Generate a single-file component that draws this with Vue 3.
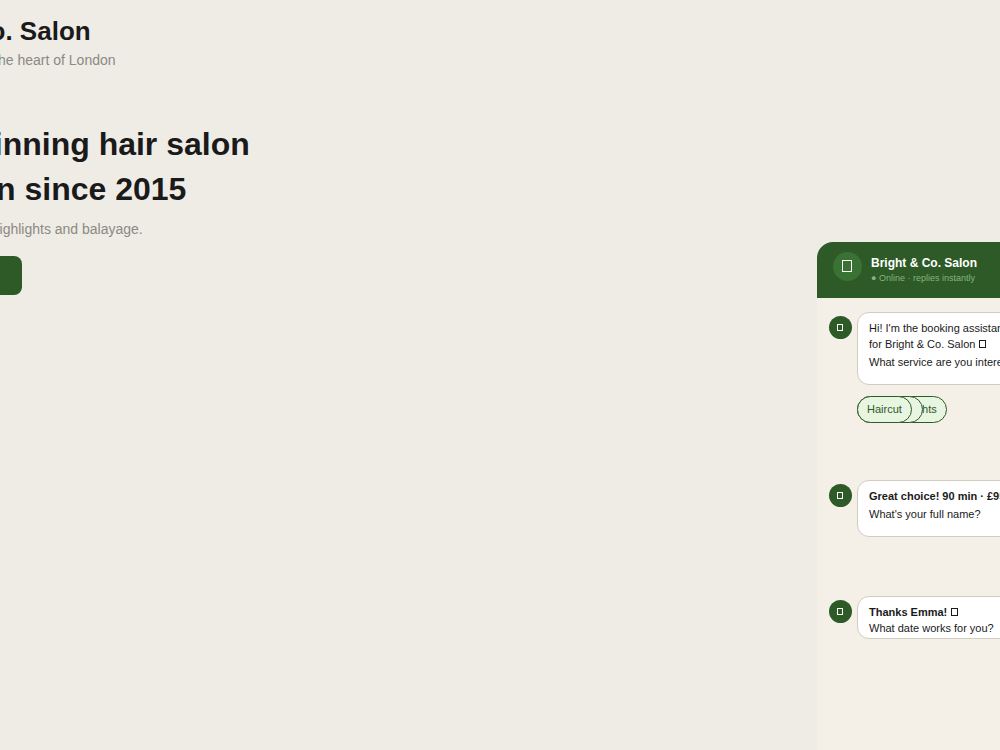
<script setup>
const headline = ['Award-winning hair salon', 'in London since 2015']
const services = [
  { name: 'Hair highlights' },
  { name: 'Colour', wide: true },
  { name: 'Haircut' },
]
</script>

<template>
  <div class="page">
    <main class="intro">
      <h1 class="brand">Bright &amp; Co. Salon</h1>
      <p class="note tagline">Leading hair salon in the heart of London</p>
      <h2 class="headline">
        <span v-for="line in headline" :key="line">{{ line }}</span>
      </h2>
      <p class="note">Specialists in colour, highlights and balayage.</p>
      <button class="book" type="button">Book now</button>
    </main>

    <aside class="chat" aria-label="Booking assistant">
      <header class="chat-head">
        <span class="logo"><svg width="10" height="12" viewBox="0 0 10 12"><rect x=".5" y=".5" width="9" height="11" /></svg></span>
        <div>
          <h3 class="chat-name">Bright &amp; Co. Salon</h3>
          <p class="status">● Online · replies instantly</p>
        </div>
      </header>

      <div class="messages">
        <section class="row first">
          <span class="avatar"><svg width="6" height="7" viewBox="0 0 6 7"><rect x=".5" y=".5" width="5" height="6" /></svg></span>
          <div class="bubble">
            <p>Hi! I'm the booking assistant</p>
            <p>for Bright &amp; Co. Salon <svg class="mark" width="7" height="8" viewBox="0 0 7 8"><rect x=".5" y=".5" width="6" height="7" /></svg></p>
            <p class="question">What service are you interested in?</p>
          </div>
          <div class="services">
            <button
              v-for="service in services"
              :key="service.name"
              class="chip"
              :class="{ wide: service.wide }"
              type="button"
            >{{ service.name }}</button>
          </div>
        </section>

        <section class="row second">
          <span class="avatar"><svg width="6" height="7" viewBox="0 0 6 7"><rect x=".5" y=".5" width="5" height="6" /></svg></span>
          <div class="bubble">
            <p><strong>Great choice! 90 min · £95</strong></p>
            <p class="question">What's your full name?</p>
          </div>
        </section>

        <section class="row third">
          <span class="avatar"><svg width="6" height="7" viewBox="0 0 6 7"><rect x=".5" y=".5" width="5" height="6" /></svg></span>
          <div class="bubble">
            <p><strong>Thanks Emma! </strong><svg class="mark" width="7" height="8" viewBox="0 0 7 8"><rect x=".5" y=".5" width="6" height="7" /></svg></p>
            <p>What date works for you?</p>
          </div>
        </section>
      </div>
    </aside>
  </div>
</template>

<style>
body {
  background: #efece5;
}
</style>

<style scoped>
.page {
  display: grid;
  grid-template-columns: 1fr 183px;
  height: 100vh;
  overflow: hidden;
  background: #efece5;
  color: #1a1a1a;
  font-family: "Liberation Sans", Arial, sans-serif;
}
h1, h2, h3, p {
  margin: 0;
}
svg {
  fill: none;
  stroke: currentColor;
}
.intro {
  margin-left: -139px;
  padding-top: 16px;
  white-space: nowrap;
}
.brand {
  font-size: 26px;
  line-height: 30px;
}
.note {
  color: #8a8984;
  font-size: 14px;
  line-height: 16px;
}
.tagline {
  margin-top: 6px;
}
.headline {
  margin: 54px 0 9px;
  font-size: 32px;
  line-height: 45px;
}
.headline span {
  display: block;
}
.book {
  display: block;
  width: 161px;
  height: 39px;
  margin-top: 19px;
  border: 0;
  border-radius: 8px;
  background: #2d5a27;
  color: #fff;
  font: bold 14px "Liberation Sans", Arial, sans-serif;
}
.chat {
  display: flex;
  flex-direction: column;
  width: 340px;
  margin-top: 242px;
  border-radius: 16px 16px 0 0;
  overflow: hidden;
  background: #f4efe7;
}
.chat-head {
  display: flex;
  gap: 9px;
  height: 56px;
  padding: 10px 16px;
  box-sizing: border-box;
  background: #2d5a27;
  color: #fff;
}
.logo,
.avatar {
  display: grid;
  place-items: center;
  box-sizing: border-box;
  border-radius: 50%;
}
.logo {
  width: 29px;
  height: 29px;
  padding: 0 1px 1px 0;
  background: #3a7233;
}
.chat-name {
  margin-top: 4px;
  font-size: 12px;
  line-height: 14px;
}
.status {
  margin-top: 3px;
  color: #86b57d;
  font-size: 9px;
  line-height: 10px;
}
.messages {
  flex: 1;
  padding: 14px 12px;
}
.row {
  display: grid;
  grid-template-columns: 23px 240px;
  column-gap: 5px;
  align-items: start;
}
.second {
  margin-top: 57px;
}
.third {
  margin-top: 59px;
}
.avatar {
  width: 23px;
  height: 23px;
  margin-top: 4px;
  padding-right: 1px;
  background: #2d5a27;
  color: #fff;
}
.bubble {
  box-sizing: border-box;
  padding: 7px 11px 2px;
  border: 1px solid #d0ccc0;
  border-radius: 12px;
  background: #fff;
  font-size: 11px;
  line-height: 16px;
  white-space: nowrap;
}
.first .bubble,
.second .bubble {
  padding-bottom: 14px;
}
.question {
  margin-top: 2px;
}
.mark {
  margin-left: 1px;
  vertical-align: baseline;
}
.services {
  grid-column: 2;
  display: grid;
  justify-items: start;
  margin-top: 11px;
}
.chip {
  grid-area: 1 / 1;
  height: 27px;
  padding: 0 9px 2px;
  border: 1px solid #2d5a27;
  border-radius: 14px;
  background: #e8f5e1;
  color: #2d5a27;
  font: 11px "Liberation Sans", Arial, sans-serif;
}
.wide {
  width: 66px;
}
</style>
